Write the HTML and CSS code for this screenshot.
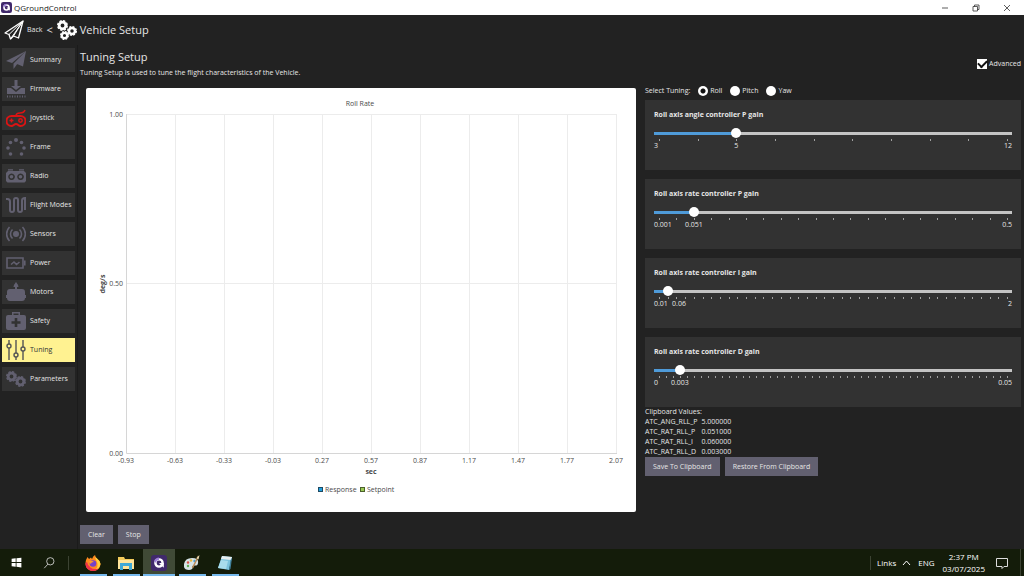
FILE: index.html
```html
<!DOCTYPE html>
<html lang="en">
<head>
    <meta charset="UTF-8">
    <meta name="viewport" content="width=device-width, initial-scale=1.0">
    <title>QGroundControl</title>
    <link rel="stylesheet" href="styles.css">
</head>
<body>
    <svg class="sprite" aria-hidden="true">
        <symbol id="gear" viewBox="0 0 20 20">
            <circle cx="10" cy="10" r="6" fill="none" stroke="currentColor" stroke-width="5"/>
            <circle cx="10" cy="10" r="8.7" fill="none" stroke="currentColor" stroke-width="2.600" stroke-dasharray="4.200 2.630"/>
        </symbol>
        <symbol id="qgc" viewBox="0 0 20 20">
            <rect width="20" height="20" rx="4" fill="#40296b"/>
            <circle cx="10" cy="10" r="4.500" fill="none" stroke="#fff" stroke-width="3"/>
            <path d="M10 10h6v6z" fill="#fff"/>
            <path d="M4 7a7 7 0 0 1 6-4v3a5 5 0 0 0-4 4z" fill="#9d7fd8"/>
        </symbol>
    </svg>

    <header class="titlebar">
        <svg class="app-icon"><use href="#qgc"/></svg>
        <span class="app-name">QGroundControl</span>
        <div class="window-buttons">
            <button aria-label="Minimize"><svg viewBox="0 0 8 8"><path d="M1 4h6"/></svg></button>
            <button aria-label="Restore"><svg viewBox="0 0 8 8"><path d="M1 2.500h4.500V7H1zM2.500 2.500V1H7v4.500H5.500"/></svg></button>
            <button aria-label="Close"><svg viewBox="0 0 8 8"><path d="M1 1l6 6M7 1L1 7"/></svg></button>
        </div>
    </header>

    <nav class="toolbar">
        <a class="back" href="#">
            <svg class="tool-icon" viewBox="0 0 20 20" fill="none" stroke="#fff" stroke-width="1.300" stroke-linejoin="round">
                <path d="M19 1L1 13l4 1.500L6.500 19l3-3 5 2z"/>
                <path d="M19 1L5 14.500M19 1L6.500 19M19 1L9.500 16" stroke-width="1"/>
            </svg>
            <span>Back</span>
        </a>
        <span class="chevron">&lt;</span>
        <svg class="tool-icon gears" viewBox="0 0 20 20">
            <use href="#gear" x="0" y="0" width="11" height="11"/>
            <use href="#gear" x="10" y="6" width="10" height="10"/>
            <use href="#gear" x="3" y="11" width="9" height="9"/>
        </svg>
        <h1>Vehicle Setup</h1>
    </nav>

    <div class="app">
        <aside class="sidebar">
            <button>
                <svg viewBox="0 0 20 20"><path d="M20 1L0 11l6 2zM20 1L7.500 13.500V19l3-4zM20 1l-9 13 6 2.500z"/></svg>
                <span>Summary</span>
            </button>
            <button>
                <svg viewBox="0 0 20 20"><path d="M8.500 1h3v6H15l-5 4-5-4h3.500zM1 9h4l5 4 5-4h4v6H1z"/><path d="M1 17.500h19" stroke="currentColor" stroke-width="2" stroke-dasharray="1 1.500"/></svg>
                <span>Firmware</span>
            </button>
            <button class="warning">
                <svg viewBox="0 0 20 20" fill="none" stroke="currentColor">
                    <path d="M5.500 8h9a4.500 4.500 0 0 1 0 10c-2 0-2.500-2-4.500-2s-2.500 2-4.500 2a4.500 4.500 0 0 1 0-10z" stroke-width="2"/>
                    <path d="M10 8c0-3 2-3 4-3s4 0 5-3M3.500 12.500h4M5.500 10.500v4" stroke-width="1.500"/>
                    <circle cx="14.500" cy="12.500" r="1.700" stroke-width="1.500"/>
                </svg>
                <span>Joystick</span>
            </button>
            <button>
                <svg viewBox="0 0 20 20">
                    <circle cx="10" cy="3" r="2"/><circle cx="4.500" cy="5.500" r="1.800"/><circle cx="15.500" cy="5.500" r="1.800"/>
                    <circle cx="2" cy="11" r="1.800"/><circle cx="18" cy="11" r="1.800"/><circle cx="4.500" cy="17" r="1.800"/><circle cx="15.500" cy="17" r="1.800"/>
                </svg>
                <span>Frame</span>
            </button>
            <button>
                <svg viewBox="0 0 20 20"><path fill-rule="evenodd" d="M2 5h16l2 2v8l-1.500 1.500h-17L0 15V7zM5.500 7.500a3.300 3.300 0 1 0 .1 0zM14.500 7.500a3.300 3.300 0 1 0 .1 0zM2 3.200h5V4.500H2zM13 3.200h5V4.500h-5z"/><circle cx="5.500" cy="10.800" r="1.800"/><circle cx="14.500" cy="10.800" r="1.800"/></svg>
                <span>Radio</span>
            </button>
            <button>
                <svg viewBox="0 0 20 20" fill="none" stroke="currentColor" stroke-width="2"><path d="M0 4h1.500Q4 4 4 6.500V15a2 2 0 0 0 4 0V5a2 2 0 0 1 4 0v10a2 2 0 0 0 4 0V5.500Q16 3 19 3v12"/></svg>
                <span>Flight Modes</span>
            </button>
            <button>
                <svg viewBox="0 0 20 20" fill="none" stroke="currentColor" stroke-width="1.600"><circle cx="10" cy="10" r="2.200" fill="currentColor"/><path d="M6.500 5.500a6 6 0 0 0 0 9M13.500 5.500a6 6 0 0 1 0 9M3.500 3a10 10 0 0 0 0 14M16.500 3a10 10 0 0 1 0 14"/></svg>
                <span>Sensors</span>
            </button>
            <button>
                <svg viewBox="0 0 20 20" fill="none" stroke="currentColor" stroke-width="1.600"><path d="M1 5h16v10H1zM18.800 7.500v5M5 11.500l3-2.500 2.500 2.500 3-2.500"/></svg>
                <span>Power</span>
            </button>
            <button>
                <svg viewBox="0 0 20 20"><path d="M10 0q2.500 3 2.500 5h-5Q7.500 3 10 0zM9 5h2v2H9zM4 7h12q3 0 3 3v3h1v3h-1q0 3-3 3H4q-3 0-3-3H0v-3h1v-3q0-3 3-3z"/></svg>
                <span>Motors</span>
            </button>
            <button>
                <svg viewBox="0 0 20 20"><path fill-rule="evenodd" d="M6 4V1h8v3h4q2 0 2 2v11q0 2-2 2H2q-2 0-2-2V6q0-2 2-2zM7.500 4h5V2.500h-5zM8.700 7v3.200H5.500v2.600h3.200V16h2.600v-3.200h3.200v-2.600h-3.200V7z"/></svg>
                <span>Safety</span>
            </button>
            <button class="active">
                <svg viewBox="0 0 20 20" fill="none" stroke="currentColor" stroke-width="1.400">
                    <path d="M3 0v4M3 8v12M10 0v13M10 17v3M17 0v7M17 11v9"/>
                    <circle cx="3" cy="6" r="2"/><circle cx="10" cy="15" r="2"/><circle cx="17" cy="9" r="2"/>
                </svg>
                <span>Tuning</span>
            </button>
            <button>
                <svg viewBox="0 0 20 20">
                    <use href="#gear" x="0" y="2" width="11" height="11"/>
                    <use href="#gear" x="9" y="7" width="11" height="11"/>
                </svg>
                <span>Parameters</span>
            </button>
        </aside>

        <main>
            <div class="page-head">
                <div>
                    <h2>Tuning Setup</h2>
                    <p>Tuning Setup is used to tune the flight characteristics of the Vehicle.</p>
                </div>
                <label class="check"><input type="checkbox" checked>Advanced</label>
            </div>

            <div class="workspace">
                <div class="chart-card">
                    <svg class="chart" viewBox="0 0 550 424" role="img" aria-label="Roll Rate chart">
                        <path class="grid" d="M89.500 26v339M138.500 26v339M187.500 26v339M236.500 26v339M285.500 26v339M334.500 26v339M383.500 26v339M432.500 26v339M481.500 26v339M530.500 26v339M40 26.500h491M40 195.500h491"/>
                        <path class="axis" d="M40.500 26v339.500H531"/>
                        <text class="middle" x="274" y="18">Roll Rate</text>
                        <g class="end">
                            <text x="37" y="29">1.00</text>
                            <text x="37" y="198">0.50</text>
                            <text x="37" y="368">0.00</text>
                        </g>
                        <g class="middle">
                            <text x="40" y="375">-0.93</text>
                            <text x="89" y="375">-0.63</text>
                            <text x="138" y="375">-0.33</text>
                            <text x="187" y="375">-0.03</text>
                            <text x="236" y="375">0.27</text>
                            <text x="285" y="375">0.57</text>
                            <text x="334" y="375">0.87</text>
                            <text x="383" y="375">1.17</text>
                            <text x="432" y="375">1.47</text>
                            <text x="481" y="375">1.77</text>
                            <text x="530" y="375">2.07</text>
                        </g>
                        <text class="middle title" x="285" y="386">sec</text>
                        <text class="middle title" transform="translate(19 196) rotate(-90)">deg/s</text>
                        <rect x="232.500" y="399.500" width="4" height="4" fill="#209fdf" stroke="#1f4a62"/>
                        <text x="239" y="404">Response</text>
                        <rect x="274.500" y="399.500" width="4" height="4" fill="#99ca53" stroke="#4c602c"/>
                        <text x="281" y="404">Setpoint</text>
                    </svg>
                </div>

                <div class="tuning">
                    <div class="axis-select">
                        <span>Select Tuning:</span>
                        <label><input type="radio" name="axis" checked>Roll</label>
                        <label><input type="radio" name="axis">Pitch</label>
                        <label><input type="radio" name="axis">Yaw</label>
                    </div>

                    <div class="panels">
                        <div class="panel" style="--pos: 0.2222; --steps: 9">
                            <label for="angP">Roll axis angle controller P gain</label>
                            <input type="range" id="angP" min="3" max="12" step="1" value="5">
                            <div class="ticks"></div>
                            <div class="values"><span>3</span><output for="angP">5</output><span>12</span></div>
                        </div>
                        <div class="panel" style="--pos: 0.1002; --steps: 20">
                            <label for="ratP">Roll axis rate controller P gain</label>
                            <input type="range" id="ratP" min="0.001" max="0.5" step="0.001" value="0.051">
                            <div class="ticks"></div>
                            <div class="values"><span>0.001</span><output for="ratP">0.051</output><span>0.5</span></div>
                        </div>
                        <div class="panel" style="--pos: 0.0251; --steps: 40">
                            <label for="ratI">Roll axis rate controller I gain</label>
                            <input type="range" id="ratI" min="0.01" max="2" step="0.01" value="0.06">
                            <div class="ticks"></div>
                            <div class="values"><span>0.01</span><output for="ratI">0.06</output><span>2</span></div>
                        </div>
                        <div class="panel" style="--pos: 0.06; --steps: 50">
                            <label for="ratD">Roll axis rate controller D gain</label>
                            <input type="range" id="ratD" min="0" max="0.05" step="0.001" value="0.003">
                            <div class="ticks"></div>
                            <div class="values"><span>0</span><output for="ratD">0.003</output><span>0.05</span></div>
                        </div>
                    </div>

                    <table class="clipboard">
                        <caption>Clipboard Values:</caption>
                        <tr><th scope="row">ATC_ANG_RLL_P</th><td>5.000000</td></tr>
                        <tr><th scope="row">ATC_RAT_RLL_P</th><td>0.051000</td></tr>
                        <tr><th scope="row">ATC_RAT_RLL_I</th><td>0.060000</td></tr>
                        <tr><th scope="row">ATC_RAT_RLL_D</th><td>0.003000</td></tr>
                    </table>
                    <div class="actions">
                        <button>Save To Clipboard</button>
                        <button>Restore From Clipboard</button>
                    </div>
                </div>
            </div>

            <div class="actions chart-actions">
                <button>Clear</button>
                <button>Stop</button>
            </div>
        </main>
    </div>

    <footer class="taskbar">
        <button aria-label="Start"><svg viewBox="0 0 16 16" fill="#fff"><path d="M2 3.500l5-.7v4.700H2zM8 2.700L14 2v5.500H8zM2 8.500h5v4.700l-5-.7zM8 8.500h6V14l-6-.8z"/></svg></button>
        <button aria-label="Search"><svg viewBox="0 0 16 16" fill="none" stroke="#ddd"><circle cx="9" cy="6.500" r="4.500"/><path d="M6 10L1.500 15"/></svg></button>
        <span class="divider"></span>
        <button class="running" aria-label="Firefox">
            <svg viewBox="0 0 16 16">
                <path d="M1 5l1.500-3L4 4l2-1.500L7 4q1-3 3-4 0 2 2 3.500 3 2 3.500 5.500A7.500 7 0 0 1 .5 9Q.5 7 1 5z" fill="#ff8a1f"/>
                <path d="M10 0q0 2 2 3.500 3 2 3.500 5.500-1 5-6 6.500Q14 12 12 7 10 4 10 0z" fill="#ffd23e"/>
                <path d="M.6 8A7.500 7 0 0 0 9 16q3-.5 4.500-2.500-5 1.500-8-1T2 7z" fill="#f0304a"/>
                <circle cx="8" cy="8.500" r="3.300" fill="#7541c9"/>
                <path d="M4 6q3-1 5 1-3 0-3 2-2-1-2-3z" fill="#ff9a2a"/>
            </svg>
        </button>
        <button class="running" aria-label="File Explorer">
            <svg viewBox="0 0 16 16"><path d="M0 2h6l1 2h9v10H0z" fill="#f3cc5c"/><path d="M0 5h16v9H0z" fill="#ffe59b"/><path d="M2 8h12v7h-3v-4H5v4H2z" fill="#3fa9d6"/></svg>
        </button>
        <button class="running current" aria-label="QGroundControl"><svg><use href="#qgc"/></svg></button>
        <button class="running" aria-label="Paint">
            <svg viewBox="0 0 16 16">
                <path d="M0 9Q1 3 8 3t6 5q0 3-4 2.500-2 0-1.500 2T5 15Q-1 15 0 9z" fill="#d7e3e6"/>
                <circle cx="4" cy="7.500" r="1.200" fill="#d9534a"/><circle cx="7" cy="5.500" r="1.200" fill="#e9b93a"/><circle cx="10.500" cy="6" r="1.200" fill="#4c9fd4"/><circle cx="4" cy="11" r="1.200" fill="#5fae52"/>
                <path d="M14.500 1l-6 12" stroke="#b98a58" stroke-width="1.500"/><path d="M15.500 0l-3 3 2 1.500z" fill="#e5d6b0"/>
            </svg>
        </button>
        <button class="running" aria-label="Notepad">
            <svg viewBox="0 0 16 16"><path d="M5 1l10 1-3 13-11-2z" fill="#7cc3dd"/><path d="M5 1l10 1-1 3L4 4z" fill="#e6eef0"/><path d="M4 5l7 1-2 8-8-1z" fill="#a9dcec"/><path d="M13.500 5L15 3l-1.500 11-1.500 1z" fill="#3f7f9b"/></svg>
        </button>
        <div class="tray">
            <span class="divider"></span>
            <span class="links">Links</span>
            <svg class="tray-arrow" viewBox="0 0 9 6"><path d="M1 5l3.500-4L8 5"/></svg>
            <span class="lang">ENG</span>
            <div class="clock"><span>2:37 PM</span><span>03/07/2025</span></div>
            <svg class="notify" viewBox="0 0 12 12"><path d="M.5 1.500h11v8H8l-2 2v-2H.5z"/></svg>
            <span class="show-desktop"></span>
        </div>
    </footer>
</body>
</html>
```
FILE: styles.css
```css
* {
    box-sizing: border-box;
}

body {
    margin: 0;
    min-height: 100vh;
    display: flex;
    flex-direction: column;
    background: #222;
    color: #e6e6e6;
    font-family: 'Open Sans', 'Noto Sans', sans-serif;
    font-size: 7px;
    line-height: 10px;
}

button {
    border: none;
    padding: 0;
    background: none;
    color: inherit;
    font: inherit;
    cursor: pointer;
}

h1, h2, p {
    margin: 0;
}

h1, h2 {
    font-size: 11px;
    font-weight: normal;
}

.sprite {
    display: none;
}

/* Window title bar */
.titlebar {
    display: flex;
    align-items: center;
    height: 15px;
    padding-left: 1px;
    background: #fff;
    color: #222;
}

.app-icon {
    width: 11px;
    height: 11px;
    margin-right: 2px;
}

.app-name {
    font-size: 8px;
}

.window-buttons {
    display: flex;
    margin-left: auto;
    margin-right: 2px;
}

.window-buttons button {
    width: 31px;
    height: 15px;
    display: flex;
    align-items: center;
    justify-content: center;
}

.window-buttons svg {
    width: 8px;
    height: 8px;
    fill: none;
    stroke: #333;
    stroke-width: 0.8;
}

/* Toolbar */
.toolbar {
    display: flex;
    align-items: center;
    height: 30px;
    padding-left: 4px;
}

.back {
    display: flex;
    align-items: center;
    gap: 3px;
    color: inherit;
    text-decoration: none;
}

.tool-icon {
    width: 20px;
    height: 20px;
}

.chevron {
    margin: 0 4px;
    font-size: 11px;
}

.gears {
    margin-right: 3px;
    color: #fff;
}

/* Layout */
.app {
    flex: 1;
    display: flex;
}

.sidebar {
    display: flex;
    flex-direction: column;
    gap: 5px;
    width: 78px;
    padding: 3px 2px 0;
    border-right: 1px solid #1b1b1b;
}

.sidebar button {
    display: flex;
    align-items: center;
    gap: 4px;
    height: 24px;
    padding-left: 4px;
    background: #323232;
    text-align: left;
    white-space: nowrap;
}

.sidebar svg {
    flex: none;
    width: 20px;
    height: 20px;
    color: #626070;
    fill: currentColor;
}

.sidebar svg[fill="none"] {
    fill: none;
}

.sidebar .warning svg {
    color: #dc1414;
}

.sidebar .active {
    background: #fff291;
    color: #333;
}

.sidebar .active svg {
    color: #555;
}

main {
    flex: 1;
    padding: 3px 3px 5px 2px;
}

.page-head {
    display: flex;
    justify-content: space-between;
    align-items: center;
    padding-bottom: 6px;
}

.page-head h2 {
    line-height: 18px;
}

.page-head p {
    line-height: 14px;
}

.check {
    display: flex;
    align-items: center;
    gap: 2px;
}

.check input {
    appearance: none;
    width: 10px;
    height: 10px;
    margin: 0;
    background: #fff;
    display: grid;
    place-items: center;
}

.check input:checked::before {
    content: "";
    width: 7px;
    height: 4px;
    margin-bottom: 2px;
    border: solid #111;
    border-width: 0 0 2px 2px;
    transform: rotate(-45deg);
}

.workspace {
    display: grid;
    grid-template-columns: 556fr 376fr;
    gap: 9px;
    align-items: start;
}

/* Chart */
.chart-card {
    margin: 2px 0 0 6px;
    background: #fff;
    border-radius: 2px;
}

.chart {
    display: block;
    width: 100%;
    font-size: 7px;
    fill: #4a4a4a;
}

.chart .grid {
    stroke: #ececec;
    fill: none;
}

.chart .axis {
    stroke: #d6d6d6;
    fill: none;
}

.chart .middle {
    text-anchor: middle;
}

.chart .end {
    text-anchor: end;
}

.chart .title {
    font-weight: bold;
}

/* Tuning controls */
.axis-select {
    display: flex;
    align-items: center;
    gap: 8px;
    height: 10px;
    margin-bottom: 4px;
}

.axis-select label {
    display: flex;
    align-items: center;
    gap: 2px;
}

.axis-select input {
    appearance: none;
    width: 10px;
    height: 10px;
    margin: 0;
    border-radius: 50%;
    background: #fff;
}

.axis-select input:checked {
    background: radial-gradient(circle, #111 2px, #fff 3px);
}

.panels {
    display: flex;
    flex-direction: column;
    gap: 9px;
}

.panel {
    height: 70px;
    padding: 10px 9px 0;
    background: #323232;
}

.panel label {
    display: block;
    font-weight: bold;
}

.panel input {
    appearance: none;
    display: block;
    width: 100%;
    height: 10px;
    margin: 8px 0 0;
    background: linear-gradient(to right, #4f9bd9 calc(5px + var(--pos) * (100% - 10px)), #c4c4c4 0) center / 100% 3px no-repeat;
}

.panel input::-webkit-slider-thumb {
    appearance: none;
    width: 10px;
    height: 10px;
    border-radius: 50%;
    background: #fff;
}

.ticks {
    height: 2px;
    margin: 1px 4px 0 5px;
    background: repeating-linear-gradient(to right, #a0a0a0 0 1px, transparent 1px calc((100% - 1px) / var(--steps)));
}

.values {
    position: relative;
    display: flex;
    justify-content: space-between;
}

/* the current value sits under the thumb, but never over the minimum */
.values output {
    position: absolute;
    left: max(25px, calc(5px + var(--pos) * (100% - 10px)));
    transform: translateX(-50%);
}

.clipboard {
    border-collapse: collapse;
}

.clipboard caption {
    text-align: left;
}

.clipboard th,
.clipboard td {
    padding: 0 4px 0 0;
    font-weight: normal;
    text-align: left;
}

.actions {
    display: flex;
    gap: 5px;
}

.actions button {
    height: 19px;
    padding: 0 8px;
    background: #626070;
}

.chart-actions {
    margin-top: 13px;
}

/* Taskbar */
.taskbar {
    display: flex;
    align-items: center;
    gap: 1px;
    height: 27px;
    background: #141c0a;
    color: #fff;
    font-size: 8px;
}

.taskbar button {
    display: flex;
    align-items: center;
    justify-content: center;
    width: 32px;
    height: 27px;
}

.taskbar button svg {
    width: 16px;
    height: 16px;
}

.taskbar button:nth-child(-n+2) svg {
    width: 13px;
    height: 13px;
}

.divider {
    width: 1px;
    height: 14px;
    background: #3c4333;
}

.taskbar > .divider {
    margin: 0 7px 0 2px;
}

.running {
    background: linear-gradient(#76b9ed, #76b9ed) center bottom / 27px 2px no-repeat;
}

.running.current {
    background-color: #404a36;
    background-size: 32px 2px;
}

.tray {
    display: flex;
    align-items: center;
    height: 27px;
    margin-left: auto;
}

.links {
    margin: 0 6px;
}

.tray-arrow {
    width: 9px;
    height: 6px;
    fill: none;
    stroke: #fff;
}

.lang {
    margin: 0 8px 0 7px;
}

.clock {
    display: flex;
    flex-direction: column;
    align-items: center;
    line-height: 12px;
}

.notify {
    width: 12px;
    height: 12px;
    margin: 0 12px 0 11px;
    fill: none;
    stroke: #ddd;
}

.show-desktop {
    width: 4px;
    height: 27px;
    border-left: 1px solid #3c4333;
}
```
